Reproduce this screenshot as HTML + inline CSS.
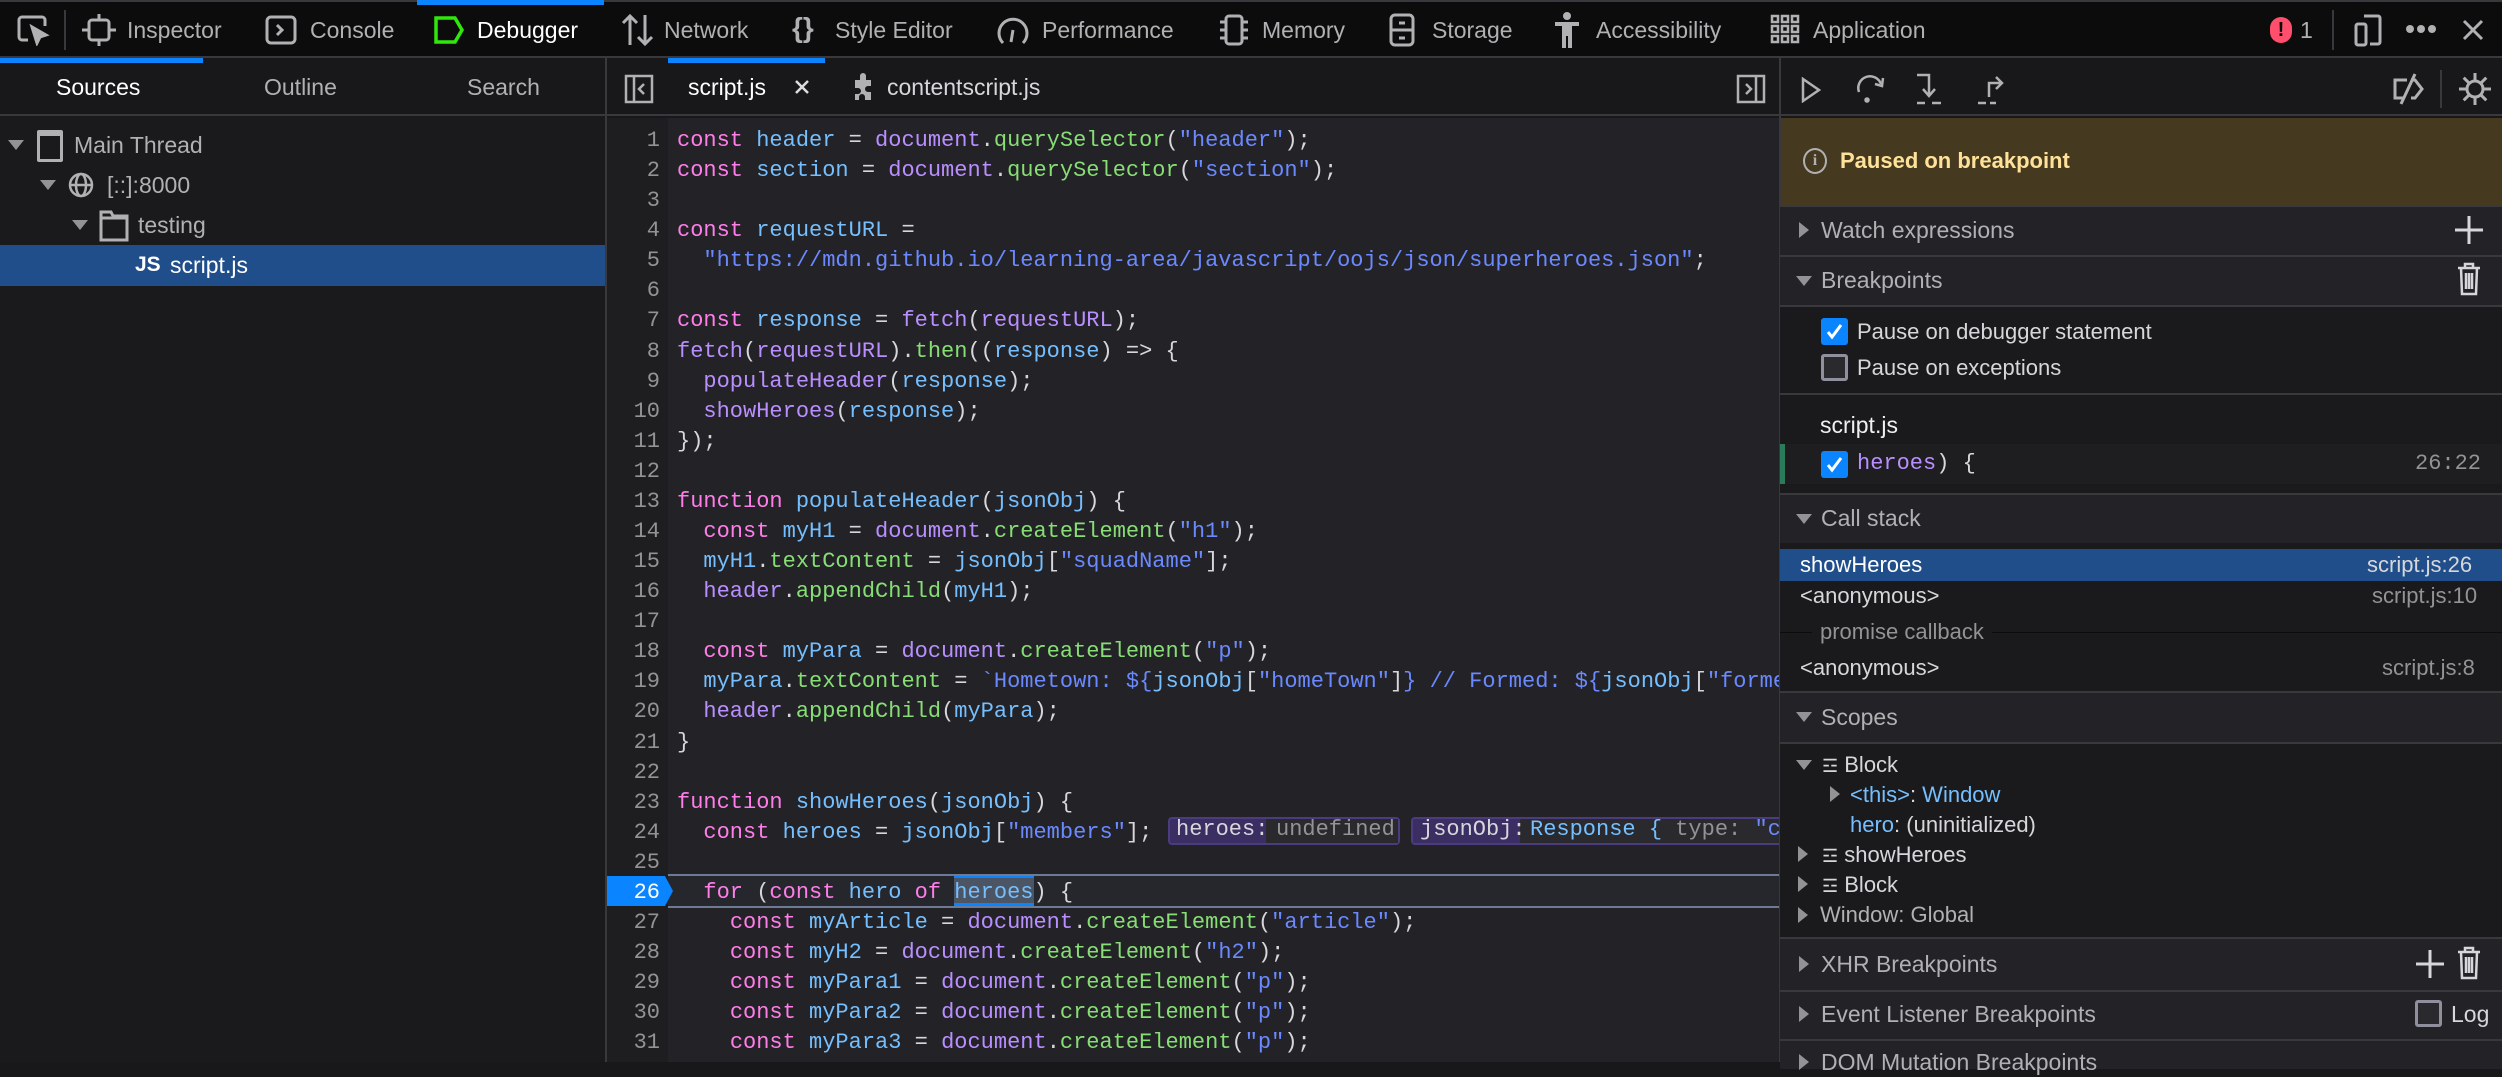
<!DOCTYPE html>
<html><head><meta charset="utf-8">
<style>
*{margin:0;padding:0;box-sizing:border-box}
body{width:2502px;height:1062px;overflow:hidden;background:#18181a;font-family:"Liberation Sans",sans-serif;color:#d7d7db;position:relative}
.a{position:absolute;white-space:nowrap}
.ui{font-size:23px;line-height:30px;color:#b1b1b3}
.code{font-family:"Liberation Mono",monospace;font-size:22px;line-height:30px;color:#d7d7db}
.k{color:#ff7de9}.v{color:#75bfff}.f{color:#b98eff}.m{color:#86de74}.s{color:#6b89ff}
.ln{font-family:"Liberation Mono",monospace;font-size:22px;line-height:30px;color:#939395;text-align:right;width:56px;left:604px}
.hdr{position:absolute;left:1780px;width:722px;background:#232327;border-top:2px solid #38383d}
.tri{position:absolute;width:0;height:0}
.down{border-left:8px solid transparent;border-right:8px solid transparent;border-top:10px solid #939395}
.right{border-top:8px solid transparent;border-bottom:8px solid transparent;border-left:10px solid #939395}
svg{position:absolute}
</style></head><body>

<!-- Toolbar -->
<div class="a" style="left:0;top:0;width:2502px;height:58px;background:#0c0c0d;border-top:2px solid #38383d;border-bottom:2px solid #38383d"></div>
<div class="a" style="left:417px;top:0;width:187px;height:5px;background:#0a84ff"></div>
<svg style="left:16px;top:14px" width="34" height="32" viewBox="0 0 34 32" fill="none" stroke="#b1b1b3" stroke-width="3"><path d="M12 26H6a3 3 0 0 1-3-3V6a3 3 0 0 1 3-3h20a3 3 0 0 1 3 3v6"/><path d="M16 13l5 16 3-6 6-2z" fill="#b1b1b3"/></svg>
<div class="a" style="left:64px;top:10px;width:2px;height:40px;background:#38383d"></div>
<svg style="left:82px;top:14px" width="34" height="32" viewBox="0 0 34 32" fill="none" stroke="#b1b1b3" stroke-width="3"><rect x="7" y="6" width="20" height="20" rx="3"/><path d="M17 0v6M17 26v6M0 16h7M27 16h7"/></svg>
<div class="a ui" style="left:127px;top:15px">Inspector</div>
<svg style="left:265px;top:15px" width="32" height="30" viewBox="0 0 32 30" fill="none" stroke="#b1b1b3" stroke-width="3"><rect x="2" y="2" width="28" height="26" rx="4"/><path d="M12 10l5 5-5 5"/></svg>
<div class="a ui" style="left:310px;top:15px">Console</div>
<svg style="left:433px;top:15px" width="32" height="30" viewBox="0 0 32 30" fill="none" stroke="#30e60b" stroke-width="3.5"><path d="M3 3h19l7 12-7 12H3z"/></svg>
<div class="a ui" style="left:477px;top:15px;color:#fff">Debugger</div>
<svg style="left:621px;top:13px" width="34" height="34" viewBox="0 0 34 34" fill="none" stroke="#b1b1b3" stroke-width="3"><path d="M9 32V3M2 10l7-7 7 7M24 2v29M17 24l7 7 7-7"/></svg>
<div class="a ui" style="left:664px;top:15px">Network</div>
<div class="a ui" style="left:792px;top:13px;font-size:28px;font-weight:bold">{}</div>
<div class="a ui" style="left:835px;top:15px">Style Editor</div>
<svg style="left:996px;top:13px" width="34" height="34" viewBox="0 0 34 34" fill="none" stroke="#b1b1b3" stroke-width="3"><path d="M7 30A14 14 0 1 1 27 30"/><path d="M17 17l-2 12"/></svg>
<div class="a ui" style="left:1042px;top:15px">Performance</div>
<svg style="left:1218px;top:13px" width="32" height="34" viewBox="0 0 32 34" fill="none" stroke="#b1b1b3" stroke-width="3"><rect x="8" y="3" width="16" height="28" rx="3"/><path d="M2 9h6M2 17h6M2 25h6M24 9h6M24 17h6M24 25h6"/></svg>
<div class="a ui" style="left:1262px;top:15px">Memory</div>
<svg style="left:1389px;top:13px" width="26" height="34" viewBox="0 0 26 34" fill="none" stroke="#b1b1b3" stroke-width="3"><rect x="2" y="2" width="22" height="30" rx="4"/><path d="M2 17h22M10 10h6M10 25h6"/></svg>
<div class="a ui" style="left:1432px;top:15px">Storage</div>
<svg style="left:1553px;top:12px" width="28" height="36" viewBox="0 0 28 36" fill="#b1b1b3"><circle cx="14" cy="4" r="4"/><rect x="2" y="10" width="24" height="4"/><rect x="9" y="10" width="10" height="14"/><rect x="9" y="22" width="4" height="14"/><rect x="15" y="22" width="4" height="14"/></svg>
<div class="a ui" style="left:1596px;top:15px">Accessibility</div>
<svg style="left:1770px;top:14px" width="30" height="30" viewBox="0 0 30 30" fill="none" stroke="#b1b1b3" stroke-width="2.5"><rect x="2" y="2" width="6" height="6"/><rect x="12" y="2" width="6" height="6"/><rect x="22" y="2" width="6" height="6"/><rect x="2" y="12" width="6" height="6"/><rect x="12" y="12" width="6" height="6"/><rect x="22" y="12" width="6" height="6"/><rect x="2" y="22" width="6" height="6"/><rect x="12" y="22" width="6" height="6"/><rect x="22" y="22" width="6" height="6"/></svg>
<div class="a ui" style="left:1813px;top:15px">Application</div>
<div class="a" style="left:2270px;top:17px;width:22px;height:26px;border-radius:11px;background:#ff4f6d;color:#0c0c0d;font:bold 20px/26px 'Liberation Sans';text-align:center">!</div>
<div class="a ui" style="left:2300px;top:15px">1</div>
<div class="a" style="left:2332px;top:10px;width:2px;height:40px;background:#38383d"></div>
<svg style="left:2354px;top:13px" width="28" height="34" viewBox="0 0 28 34" fill="none" stroke="#b1b1b3" stroke-width="3"><rect x="2" y="11" width="10" height="21" rx="2"/><path d="M10 3h14a2 2 0 0 1 2 2v24a2 2 0 0 1-2 2h-8"/></svg>
<svg style="left:2406px;top:24px" width="30" height="10" viewBox="0 0 30 10" fill="#b1b1b3"><circle cx="4" cy="5" r="4"/><circle cx="15" cy="5" r="4"/><circle cx="26" cy="5" r="4"/></svg>
<svg style="left:2462px;top:19px" width="22" height="22" viewBox="0 0 22 22" stroke="#b1b1b3" stroke-width="3"><path d="M2 2l18 18M20 2L2 20"/></svg>

<!-- Left pane -->
<div class="a" style="left:0;top:58px;width:606px;height:58px;background:#18181a;border-bottom:2px solid #38383d"></div>
<div class="a" style="left:0;top:58px;width:203px;height:5px;background:#0a84ff"></div>
<div class="a ui" style="left:56px;top:72px;color:#fff">Sources</div>
<div class="a ui" style="left:264px;top:72px">Outline</div>
<div class="a ui" style="left:467px;top:72px">Search</div>
<div class="a" style="left:0;top:116px;width:606px;height:946px;background:#1a1a1c"></div>
<div class="tri down a" style="left:8px;top:140px"></div>
<div class="a" style="left:37px;top:130px;width:26px;height:32px;border:3px solid #b1b1b3;border-radius:2px;border-top-width:6px"></div>
<div class="a ui" style="left:74px;top:130px">Main Thread</div>
<div class="tri down a" style="left:40px;top:180px"></div>
<svg style="left:68px;top:172px" width="26" height="26" viewBox="0 0 26 26" fill="none" stroke="#b1b1b3" stroke-width="2.5"><circle cx="13" cy="13" r="11"/><ellipse cx="13" cy="13" rx="5" ry="11"/><path d="M2 13h22"/></svg>
<div class="a ui" style="left:107px;top:170px">[::]:8000</div>
<div class="tri down a" style="left:72px;top:220px"></div>
<svg style="left:99px;top:208px" width="30" height="34" viewBox="0 0 30 34" fill="none" stroke="#b1b1b3" stroke-width="3"><path d="M2 4h10l2 4h14v24H2z"/><path d="M2 10h26"/></svg>
<div class="a ui" style="left:138px;top:210px">testing</div>
<div class="a" style="left:0;top:245px;width:606px;height:41px;background:#204e8a"></div>
<div class="a ui" style="left:135px;top:250px;color:#fff;font-weight:bold;font-size:21px">JS</div>
<div class="a ui" style="left:170px;top:250px;color:#fff">script.js</div>
<div class="a" style="left:605px;top:58px;width:2px;height:1004px;background:#38383d"></div>

<!-- Editor tabs -->
<div class="a" style="left:607px;top:58px;width:1173px;height:58px;background:#18181a;border-bottom:2px solid #38383d"></div>
<div class="a" style="left:668px;top:58px;width:157px;height:5px;background:#0a84ff"></div>
<svg style="left:624px;top:74px" width="30" height="30" viewBox="0 0 30 30" fill="none" stroke="#b1b1b3" stroke-width="2.5"><rect x="2" y="2" width="26" height="26"/><path d="M10 2v26M20 10l-5 5 5 5"/></svg>
<div class="a ui" style="left:688px;top:72px;color:#fff">script.js</div>
<svg style="left:794px;top:79px" width="16" height="16" viewBox="0 0 16 16" stroke="#ddd" stroke-width="2.5"><path d="M2 2l12 12M14 2L2 14"/></svg>
<svg style="left:850px;top:72px" width="26" height="30" viewBox="0 0 26 30" fill="#b1b1b3"><path d="M5 8h5V4a3 3 0 0 1 6 0v4h5v6h-3a3 3 0 0 0 0 6h3v8h-6v-3a3 3 0 0 0-6 0v3H5v-6h3a3 3 0 0 0 0-6H5z"/></svg>
<div class="a ui" style="left:887px;top:72px;color:#d7d7db">contentscript.js</div>
<svg style="left:1736px;top:74px" width="30" height="30" viewBox="0 0 30 30" fill="none" stroke="#b1b1b3" stroke-width="2.5"><rect x="2" y="2" width="26" height="26"/><path d="M20 2v26M10 10l5 5-5 5"/></svg>

<!-- Gutter / code area -->
<div class="a" style="left:607px;top:118px;width:61px;height:944px;background:#1e1e21"></div>
<div class="a" style="left:668px;top:118px;width:1111px;height:944px;background:#232327"></div>

<!-- Line 26 highlight -->
<div class="a" style="left:668px;top:874px;width:1111px;height:34px;border-top:2px solid #6e7a94;border-bottom:2px solid #6e7a94;background:#26272c"></div>
<svg style="left:607px;top:876px" width="68" height="30" viewBox="0 0 68 30"><path d="M0 0H58L66 15 58 30H0z" fill="#0a84ff"/></svg>
<div class="a" style="left:954px;top:876px;width:80px;height:30px;background:#4c5563;border-top:2px solid #0a84ff;border-bottom:3px solid #0a84ff"></div>

<!-- inline previews line 24 -->
<div class="a" style="left:1168px;top:817px;width:232px;height:28px;background:#3a2e63;border:2px solid #4b3c80;border-radius:4px"></div>
<div class="a" style="left:1266px;top:819px;width:132px;height:24px;background:#2a2a2e"></div>
<div class="a code" style="left:1176px;top:815px;color:#d7d7db">heroes:</div>
<div class="a code" style="left:1276px;top:815px;color:#939395">undefined</div>
<div class="a" style="left:1411px;top:817px;width:380px;height:28px;background:#3a2e63;border:2px solid #4b3c80;border-radius:4px"></div>
<div class="a" style="left:1520px;top:819px;width:260px;height:24px;background:#2a2a2e"></div>
<div class="a code" style="left:1420px;top:815px">jsonObj:</div>
<div class="a code" style="left:1530px;top:815px;color:#75bfff">Response { <span style="color:#939395">type:</span> <span class="s">"co</span></div>

<div class="a code" style="left:677px;top:126px;width:1103px;overflow:hidden;line-height:30.08px">
<div><span class="k">const</span> <span class="v">header</span> = <span class="f">document</span>.<span class="m">querySelector</span>(<span class="s">"header"</span>);</div>
<div><span class="k">const</span> <span class="v">section</span> = <span class="f">document</span>.<span class="m">querySelector</span>(<span class="s">"section"</span>);</div>
<div>&nbsp;</div>
<div><span class="k">const</span> <span class="v">requestURL</span> =</div>
<div>  <span class="s">&nbsp;&nbsp;"https://mdn.github.io/learning-area/javascript/oojs/json/superheroes.json"</span>;</div>
<div>&nbsp;</div>
<div><span class="k">const</span> <span class="v">response</span> = <span class="f">fetch</span>(<span class="f">requestURL</span>);</div>
<div><span class="f">fetch</span>(<span class="f">requestURL</span>).<span class="m">then</span>((<span class="v">response</span>) =&gt; {</div>
<div>&nbsp;&nbsp;<span class="f">populateHeader</span>(<span class="v">response</span>);</div>
<div>&nbsp;&nbsp;<span class="f">showHeroes</span>(<span class="v">response</span>);</div>
<div>});</div>
<div>&nbsp;</div>
<div><span class="k">function</span> <span class="v">populateHeader</span>(<span class="v">jsonObj</span>) {</div>
<div>&nbsp;&nbsp;<span class="k">const</span> <span class="v">myH1</span> = <span class="f">document</span>.<span class="m">createElement</span>(<span class="s">"h1"</span>);</div>
<div>&nbsp;&nbsp;<span class="v">myH1</span>.<span class="m">textContent</span> = <span class="v">jsonObj</span>[<span class="s">"squadName"</span>];</div>
<div>&nbsp;&nbsp;<span class="f">header</span>.<span class="m">appendChild</span>(<span class="v">myH1</span>);</div>
<div>&nbsp;</div>
<div>&nbsp;&nbsp;<span class="k">const</span> <span class="v">myPara</span> = <span class="f">document</span>.<span class="m">createElement</span>(<span class="s">"p"</span>);</div>
<div>&nbsp;&nbsp;<span class="v">myPara</span>.<span class="m">textContent</span> = <span class="s">`Hometown: ${</span><span class="v">jsonObj</span>[<span class="s">"homeTown"</span>]<span class="s">} // Formed: ${</span><span class="v">jsonObj</span>[<span class="s">"formed"</span>]<span class="s">}`</span>;</div>
<div>&nbsp;&nbsp;<span class="f">header</span>.<span class="m">appendChild</span>(<span class="v">myPara</span>);</div>
<div>}</div>
<div>&nbsp;</div>
<div><span class="k">function</span> <span class="v">showHeroes</span>(<span class="v">jsonObj</span>) {</div>
<div>&nbsp;&nbsp;<span class="k">const</span> <span class="v">heroes</span> = <span class="v">jsonObj</span>[<span class="s">"members"</span>];</div>
<div>&nbsp;</div>
<div>&nbsp;&nbsp;<span class="k">for</span> (<span class="k">const</span> <span class="v">hero</span> <span class="k">of</span> <span class="v">heroes</span>) {</div>
<div>&nbsp;&nbsp;&nbsp;&nbsp;<span class="k">const</span> <span class="v">myArticle</span> = <span class="f">document</span>.<span class="m">createElement</span>(<span class="s">"article"</span>);</div>
<div>&nbsp;&nbsp;&nbsp;&nbsp;<span class="k">const</span> <span class="v">myH2</span> = <span class="f">document</span>.<span class="m">createElement</span>(<span class="s">"h2"</span>);</div>
<div>&nbsp;&nbsp;&nbsp;&nbsp;<span class="k">const</span> <span class="v">myPara1</span> = <span class="f">document</span>.<span class="m">createElement</span>(<span class="s">"p"</span>);</div>
<div>&nbsp;&nbsp;&nbsp;&nbsp;<span class="k">const</span> <span class="v">myPara2</span> = <span class="f">document</span>.<span class="m">createElement</span>(<span class="s">"p"</span>);</div>
<div>&nbsp;&nbsp;&nbsp;&nbsp;<span class="k">const</span> <span class="v">myPara3</span> = <span class="f">document</span>.<span class="m">createElement</span>(<span class="s">"p"</span>);</div>
</div>
<div class="a ln" style="top:126px;line-height:30.08px">1<br>2<br>3<br>4<br>5<br>6<br>7<br>8<br>9<br>10<br>11<br>12<br>13<br>14<br>15<br>16<br>17<br>18<br>19<br>20<br>21<br>22<br>23<br>24<br>25<br><span style="color:#fff">26</span><br>27<br>28<br>29<br>30<br>31</div>
<div class="a" style="left:1779px;top:58px;width:2px;height:1004px;background:#38383d"></div>

<!-- Right pane -->
<div class="a" style="left:1781px;top:58px;width:721px;height:58px;background:#18181a;border-bottom:2px solid #38383d"></div>
<svg style="left:1800px;top:77px" width="22" height="26" viewBox="0 0 22 26" fill="none" stroke="#b1b1b3" stroke-width="2.5"><path d="M3 2v22L19 13z"/></svg>
<svg style="left:1855px;top:72px" width="32" height="34" viewBox="0 0 32 34" fill="none" stroke="#b1b1b3" stroke-width="2.5"><path d="M4 20A11 11 0 0 1 26 12"/><path d="M28 6l-1 8-7-2"/><circle cx="12" cy="28" r="1.5" fill="#b1b1b3"/></svg>
<svg style="left:1914px;top:72px" width="30" height="34" viewBox="0 0 30 34" fill="none" stroke="#b1b1b3" stroke-width="2.5"><path d="M3 3h12v20M9 17l6 7 6-7M3 31h8M18 31h9"/></svg>
<svg style="left:1974px;top:72px" width="32" height="34" viewBox="0 0 32 34" fill="none" stroke="#b1b1b3" stroke-width="2.5"><path d="M15 25V11h12M22 5l6 6-6 6M4 31h8M16 31h6"/></svg>
<svg style="left:2391px;top:72px" width="34" height="34" viewBox="0 0 34 34" fill="none" stroke="#b1b1b3" stroke-width="3"><path d="M16 8H4v18h8M20 8h4l7 9-7 9h-4M24 2L10 32"/></svg>
<div class="a" style="left:2440px;top:70px;width:2px;height:38px;background:#38383d"></div>
<svg style="left:2458px;top:72px" width="34" height="34" viewBox="0 0 34 34" fill="none" stroke="#b1b1b3" stroke-width="3"><circle cx="17" cy="17" r="8"/><path d="M17 1v7M17 26v7M1 17h7M26 17h7M5.7 5.7l5 5M23.3 23.3l5 5M5.7 28.3l5-5M23.3 10.7l5-5"/></svg>

<div class="a" style="left:1781px;top:118px;width:721px;height:87px;background:#45391f"></div>
<div class="a" style="left:1803px;top:148px;width:24px;height:26px;border:2.5px solid #b1b1b3;border-radius:50%;color:#b1b1b3;font:bold 16px/21px 'Liberation Serif';text-align:center">i</div>
<div class="a ui" style="left:1840px;top:146px;color:#ffe29a;font-weight:bold;font-size:22px">Paused on breakpoint</div>

<div class="hdr" style="top:205px;height:50px"></div>
<div class="tri right a" style="left:1799px;top:222px"></div>
<div class="a ui" style="left:1821px;top:215px">Watch expressions</div>
<svg style="left:2455px;top:216px" width="28" height="28" viewBox="0 0 28 28" stroke="#d7d7db" stroke-width="3"><path d="M14 0v28M0 14h28"/></svg>

<div class="hdr" style="top:255px;height:50px"></div>
<div class="tri down a" style="left:1796px;top:276px"></div>
<div class="a ui" style="left:1821px;top:265px">Breakpoints</div>
<svg style="left:2456px;top:262px" width="26" height="34" viewBox="0 0 26 34" fill="none" stroke="#d7d7db" stroke-width="2.5"><path d="M2 6h22M9 6V2h8v4M5 6l1 26h14l1-26M10 11v16M13 11v16M16 11v16"/></svg>
<div class="a" style="left:1780px;top:305px;width:722px;height:190px;background:#1a1a1c;border-top:2px solid #38383d"></div>
<div class="a" style="left:1821px;top:318px;width:27px;height:27px;background:#0a84ff;border-radius:3px"></div>
<svg style="left:1824px;top:321px" width="21" height="21" viewBox="0 0 21 21" fill="none" stroke="#fff" stroke-width="3"><path d="M4 11l4 5 9-12"/></svg>
<div class="a ui" style="left:1857px;top:317px;font-size:22px;color:#d7d7db">Pause on debugger statement</div>
<div class="a" style="left:1821px;top:354px;width:27px;height:27px;background:#2a2a2e;border:3px solid #8f8f9d;border-radius:3px"></div>
<div class="a ui" style="left:1857px;top:353px;font-size:22px;color:#d7d7db">Pause on exceptions</div>
<div class="a" style="left:1780px;top:393px;width:722px;height:2px;background:#38383d"></div>
<div class="a ui" style="left:1820px;top:410px;color:#f0f0f4">script.js</div>
<div class="a" style="left:1780px;top:444px;width:722px;height:40px;background:#1e1e21"></div>
<div class="a" style="left:1780px;top:444px;width:5px;height:40px;background:#2a7a5c"></div>
<div class="a" style="left:1821px;top:451px;width:27px;height:27px;background:#0a84ff;border-radius:3px"></div>
<svg style="left:1824px;top:454px" width="21" height="21" viewBox="0 0 21 21" fill="none" stroke="#fff" stroke-width="3"><path d="M4 11l4 5 9-12"/></svg>
<div class="a code" style="left:1857px;top:449px"><span class="f">heroes</span>) {</div>
<div class="a code" style="left:2415px;top:449px;color:#939395">26:22</div>

<div class="hdr" style="top:493px;height:50px"></div>
<div class="tri down a" style="left:1796px;top:514px"></div>
<div class="a ui" style="left:1821px;top:503px">Call stack</div>
<div class="a" style="left:1780px;top:543px;width:722px;height:150px;background:#1a1a1c"></div>
<div class="a" style="left:1780px;top:549px;width:722px;height:32px;background:#204e8a"></div>
<div class="a ui" style="left:1800px;top:550px;color:#fff;font-size:22px">showHeroes</div>
<div class="a ui" style="left:2367px;top:550px;color:#d7d7db;font-size:22px">script.js:26</div>
<div class="a ui" style="left:1800px;top:581px;color:#d7d7db;font-size:22px">&lt;anonymous&gt;</div>
<div class="a ui" style="left:2372px;top:581px;color:#939395;font-size:22px">script.js:10</div>
<div class="a" style="left:1780px;top:632px;width:722px;height:1px;background:#0c0c0d"></div>
<div class="a" style="left:1812px;top:617px;padding:0 8px;background:#1a1a1c;color:#939395;font-size:22px;line-height:30px">promise callback</div>
<div class="a ui" style="left:1800px;top:653px;color:#d7d7db;font-size:22px">&lt;anonymous&gt;</div>
<div class="a ui" style="left:2382px;top:653px;color:#939395;font-size:22px">script.js:8</div>

<div class="hdr" style="top:691px;height:51px"></div>
<div class="tri down a" style="left:1796px;top:712px"></div>
<div class="a ui" style="left:1821px;top:702px">Scopes</div>
<div class="a" style="left:1780px;top:742px;width:722px;height:196px;background:#1a1a1c;border-top:2px solid #38383d"></div>
<div class="tri down a" style="left:1796px;top:760px"></div>
<div class="a ui" style="left:1822px;top:750px;color:#d7d7db;font-size:22px"><span style="font-size:18px">☲</span> Block</div>
<div class="tri right a" style="left:1830px;top:786px"></div>
<div class="a ui" style="left:1850px;top:780px;font-size:22px;color:#75bfff">&lt;this&gt;<span style="color:#d7d7db">:</span> Window</div>
<div class="a ui" style="left:1850px;top:810px;font-size:22px;color:#d7d7db"><span style="color:#75bfff">hero</span>: (uninitialized)</div>
<div class="tri right a" style="left:1798px;top:846px"></div>
<div class="a ui" style="left:1822px;top:840px;color:#d7d7db;font-size:22px"><span style="font-size:18px">☲</span> showHeroes</div>
<div class="tri right a" style="left:1798px;top:876px"></div>
<div class="a ui" style="left:1822px;top:870px;color:#d7d7db;font-size:22px"><span style="font-size:18px">☲</span> Block</div>
<div class="tri right a" style="left:1798px;top:907px"></div>
<div class="a ui" style="left:1820px;top:900px;font-size:22px">Window: Global</div>

<div class="hdr" style="top:937px;height:53px"></div>
<div class="tri right a" style="left:1799px;top:956px"></div>
<div class="a ui" style="left:1821px;top:949px">XHR Breakpoints</div>
<svg style="left:2416px;top:950px" width="28" height="28" viewBox="0 0 28 28" stroke="#d7d7db" stroke-width="3"><path d="M14 0v28M0 14h28"/></svg>
<svg style="left:2456px;top:946px" width="26" height="34" viewBox="0 0 26 34" fill="none" stroke="#d7d7db" stroke-width="2.5"><path d="M2 6h22M9 6V2h8v4M5 6l1 26h14l1-26M10 11v16M13 11v16M16 11v16"/></svg>
<div class="hdr" style="top:990px;height:50px"></div>
<div class="tri right a" style="left:1799px;top:1006px"></div>
<div class="a ui" style="left:1821px;top:999px">Event Listener Breakpoints</div>
<div class="a" style="left:2415px;top:1000px;width:27px;height:27px;background:#2a2a2e;border:3px solid #8f8f9d;border-radius:3px"></div>
<div class="a ui" style="left:2451px;top:999px;color:#d7d7db">Log</div>
<div class="hdr" style="top:1039px;height:30px"></div>
<div class="tri right a" style="left:1799px;top:1054px"></div>
<div class="a ui" style="left:1821px;top:1047px">DOM Mutation Breakpoints</div>
</body></html>
